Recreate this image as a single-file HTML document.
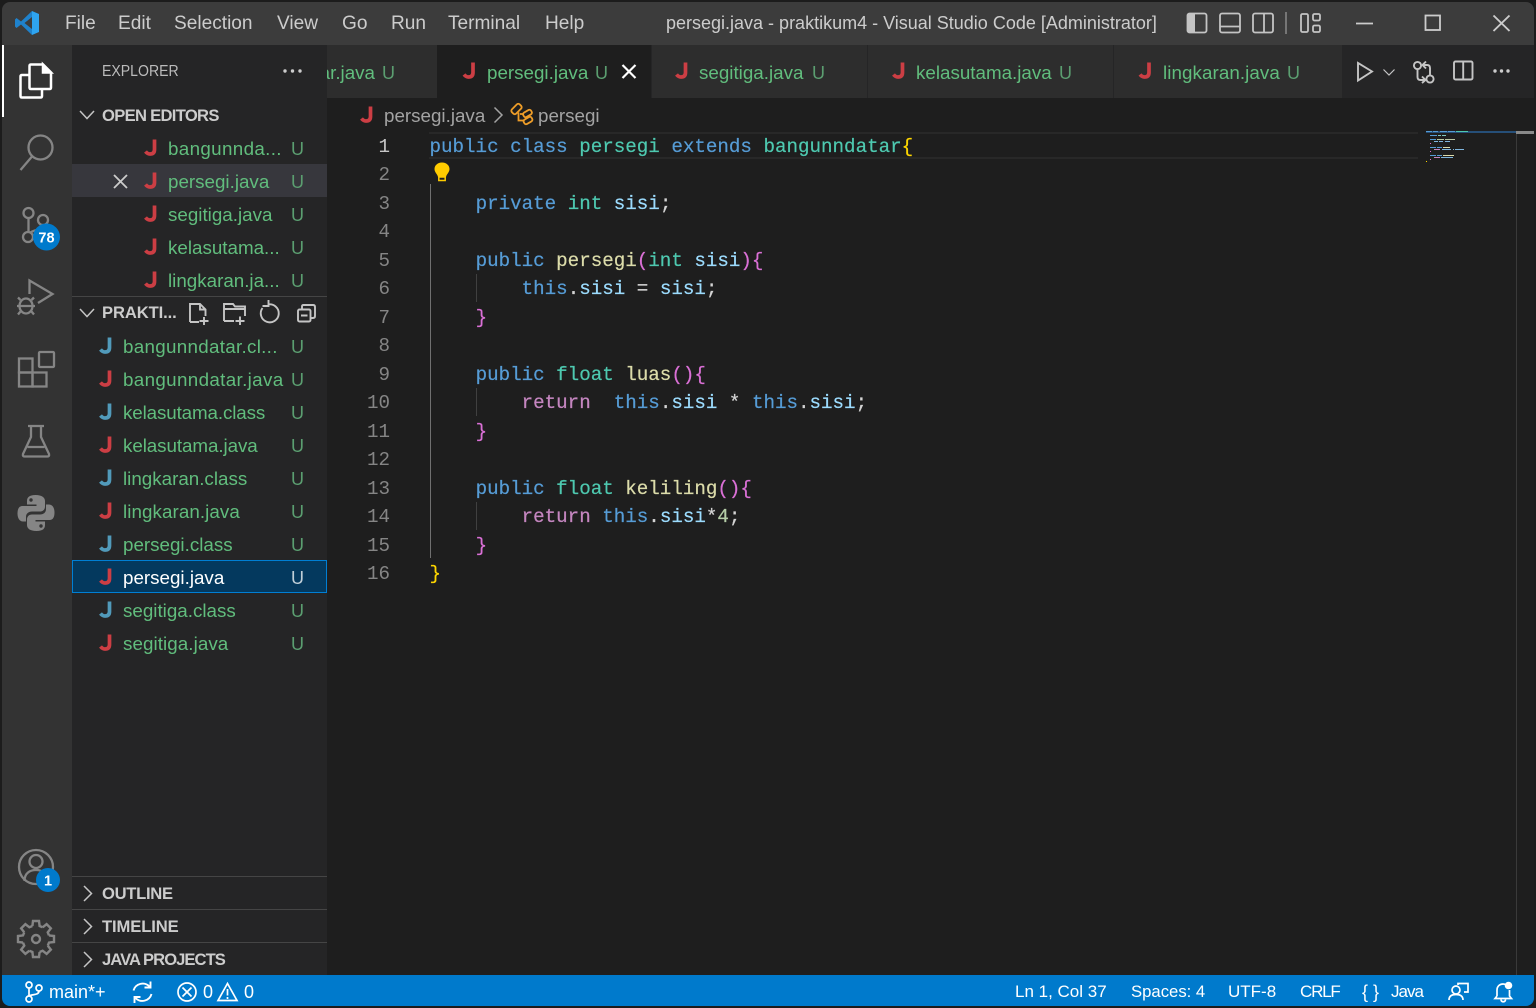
<!DOCTYPE html>
<html lang="en"><head><meta charset="utf-8"><title>persegi.java - praktikum4 - Visual Studio Code</title>
<style>
html,body{margin:0;padding:0;width:1536px;height:1008px;overflow:hidden;background:#1c1c1c}
body{position:relative;font-family:"Liberation Sans",sans-serif}
.p{position:absolute}
#win{position:absolute;left:2px;top:2px;width:1532px;height:1004px;border-radius:8px;overflow:hidden;background:#1e1e1e}
.t{position:absolute;white-space:nowrap;line-height:24px;height:24px;font-size:18.8px;color:#ccc}
.g{color:#61bd7d}.u{color:#5b9e70;font-size:18px}
.h{font-weight:700;font-size:16.6px;color:#ccc;letter-spacing:-.1px}
.m{font-size:19.1px;color:#ccc}
.s{color:#fff;font-size:17px;line-height:24px}
svg.o{position:absolute;left:0;top:0;width:1536px;height:1008px}
pre{position:absolute;margin:0;left:429.5px;top:132.5px;font:19.2px/28.53px "Liberation Mono",monospace;color:#d4d4d4;-webkit-text-stroke:.2px}
.k{color:#569cd6}.c{color:#4ec9b0}.v{color:#9cdcfe}.f{color:#dcdcaa}.y{color:#ffd700}.q{color:#da70d6}.r{color:#c586c0}.n{color:#b5cea8}
#ln{position:absolute;left:350px;width:40px;top:132.5px;text-align:right;font:19.2px/28.53px "Liberation Mono",monospace;color:#858585}
#ln b{font-weight:400;color:#c6c6c6}
</style></head><body>
<div id="win"></div>
<div class="p" style="left:2px;top:2px;width:1532px;height:43px;background:#3c3c3c;border-radius:8px 8px 0 0"></div>
<div class="p" style="left:2px;top:45px;width:70px;height:930px;background:#333"></div>
<div class="p" style="left:72px;top:45px;width:255px;height:930px;background:#252526"></div>
<div class="p" style="left:327px;top:45px;width:1207px;height:53px;background:#252526"></div>
<div class="p" style="left:327px;top:45px;width:110px;height:53px;background:#2d2d2d"></div>
<div class="p" style="left:437px;top:45px;width:214px;height:53px;background:#1e1e1e"></div>
<div class="p" style="left:652px;top:45px;width:215px;height:53px;background:#2d2d2d"></div>
<div class="p" style="left:868px;top:45px;width:245px;height:53px;background:#2d2d2d"></div>
<div class="p" style="left:1114px;top:45px;width:228px;height:53px;background:#2d2d2d"></div>
<div class="p" style="left:72px;top:164px;width:255px;height:33px;background:#37373d"></div>
<div class="p" style="left:72px;top:560px;width:253px;height:31px;background:#04395e;border:1px solid #007fd4"></div>
<div class="p" style="left:72px;top:296px;width:255px;height:1px;background:#454545"></div>
<div class="p" style="left:72px;top:876px;width:255px;height:1px;background:#454545"></div>
<div class="p" style="left:72px;top:909px;width:255px;height:1px;background:#454545"></div>
<div class="p" style="left:72px;top:942px;width:255px;height:1px;background:#454545"></div>
<div class="p" style="left:429px;top:132px;width:989px;height:2px;background:#282828"></div>
<div class="p" style="left:429px;top:157px;width:989px;height:2px;background:#282828"></div>
<div class="p" style="left:2px;top:975px;width:1532px;height:31px;background:#007acc;border-radius:0 0 8px 8px"></div>
<div class="p" style="left:2px;top:45px;width:2px;height:72px;background:#fff"></div>
<div class="p" style="left:430px;top:184px;width:1px;height:374px;background:#707070"></div>
<div class="p" style="left:476px;top:274px;width:1px;height:28px;background:#404040"></div>
<div class="p" style="left:476px;top:388px;width:1px;height:28px;background:#404040"></div>
<div class="p" style="left:476px;top:502px;width:1px;height:28px;background:#404040"></div>
<div class="p" style="left:1516px;top:131px;width:1px;height:844px;background:#3a3a3a"></div>
<div class="p" style="left:1516px;top:131px;width:18px;height:3px;background:#8a8a8a"></div>
<div class="p" style="left:1426px;top:131px;width:90px;height:2px;background:#264f78"></div>

<!-- title bar -->
<div class="t m" style="left:65px;top:12px">File</div>
<div class="t m" style="left:118px;top:12px">Edit</div>
<div class="t m" style="left:174px;top:12px">Selection</div>
<div class="t m" style="left:277px;top:12px">View</div>
<div class="t m" style="left:342px;top:12px">Go</div>
<div class="t m" style="left:391px;top:12px">Run</div>
<div class="t m" style="left:448px;top:12px">Terminal</div>
<div class="t m" style="left:545px;top:12px">Help</div>
<div class="t" style="left:666px;top:11px;font-size:18px">persegi.java - praktikum4 - Visual Studio Code [Administrator]</div>

<!-- tabs -->
<div class="t g" style="left:327px;top:61px;width:48px;overflow:hidden;direction:rtl;text-align:right"><bdi>bangunndatar.java</bdi></div>
<div class="t u" style="left:382px;top:61px">U</div>
<div class="t g" style="left:487px;top:61px">persegi.java</div><div class="t u" style="left:595px;top:61px">U</div>
<div class="t g" style="left:699px;top:61px">segitiga.java</div><div class="t u" style="left:812px;top:61px">U</div>
<div class="t g" style="left:916px;top:61px">kelasutama.java</div><div class="t u" style="left:1059px;top:61px">U</div>
<div class="t g" style="left:1163px;top:61px;letter-spacing:.07px">lingkaran.java</div><div class="t u" style="left:1287px;top:61px">U</div>

<!-- breadcrumbs -->
<div class="t" style="left:384px;top:104px;color:#a3a3a3">persegi.java</div>
<div class="t" style="left:538px;top:104px;color:#a3a3a3">persegi</div>

<!-- sidebar -->
<div class="t" style="left:102px;top:60px;font-size:16px;color:#bbb;transform:scaleX(.88);transform-origin:left center">EXPLORER</div>
<div class="t h" style="left:102px;top:104px;letter-spacing:-.7px">OPEN EDITORS</div>
<div class="t g" style="left:168px;top:137px;letter-spacing:.35px">bangunnda...</div><div class="t u" style="left:291px;top:137px">U</div>
<div class="t g" style="left:168px;top:170px">persegi.java</div><div class="t u" style="left:291px;top:170px">U</div>
<div class="t g" style="left:168px;top:203px">segitiga.java</div><div class="t u" style="left:291px;top:203px">U</div>
<div class="t g" style="left:168px;top:236px">kelasutama...</div><div class="t u" style="left:291px;top:236px">U</div>
<div class="t g" style="left:168px;top:269px">lingkaran.ja...</div><div class="t u" style="left:291px;top:269px">U</div>
<div class="t h" style="left:102px;top:301px">PRAKTI...</div>
<div class="t g" style="left:123px;top:335px;letter-spacing:.3px">bangunndatar.cl...</div><div class="t u" style="left:291px;top:335px">U</div>
<div class="t g" style="left:123px;top:368px;letter-spacing:.35px">bangunndatar.java</div><div class="t u" style="left:291px;top:368px">U</div>
<div class="t g" style="left:123px;top:401px;letter-spacing:-.12px">kelasutama.class</div><div class="t u" style="left:291px;top:401px">U</div>
<div class="t g" style="left:123px;top:434px;letter-spacing:-.07px">kelasutama.java</div><div class="t u" style="left:291px;top:434px">U</div>
<div class="t g" style="left:123px;top:467px">lingkaran.class</div><div class="t u" style="left:291px;top:467px">U</div>
<div class="t g" style="left:123px;top:500px;letter-spacing:.07px">lingkaran.java</div><div class="t u" style="left:291px;top:500px">U</div>
<div class="t g" style="left:123px;top:533px">persegi.class</div><div class="t u" style="left:291px;top:533px">U</div>
<div class="t" style="left:123px;top:566px;color:#fff">persegi.java</div><div class="t u" style="left:291px;top:566px;color:#c0cfd8">U</div>
<div class="t g" style="left:123px;top:599px">segitiga.class</div><div class="t u" style="left:291px;top:599px">U</div>
<div class="t g" style="left:123px;top:632px;letter-spacing:.07px">segitiga.java</div><div class="t u" style="left:291px;top:632px">U</div>
<div class="t h" style="left:102px;top:882px;letter-spacing:-.3px">OUTLINE</div>
<div class="t h" style="left:102px;top:915px">TIMELINE</div>
<div class="t h" style="left:102px;top:948px;letter-spacing:-.95px">JAVA PROJECTS</div>

<!-- code -->
<div id="ln"><b>1</b><br>2<br>3<br>4<br>5<br>6<br>7<br>8<br>9<br>10<br>11<br>12<br>13<br>14<br>15<br>16</div>
<pre><span class="k">public</span> <span class="k">class</span> <span class="c">persegi</span> <span class="k">extends</span> <span class="c">bangunndatar</span><span class="y">{</span>

    <span class="k">private</span> <span class="c">int</span> <span class="v">sisi</span>;

    <span class="k">public</span> <span class="f">persegi</span><span class="q">(</span><span class="c">int</span> <span class="v">sisi</span><span class="q">){</span>
        <span class="k">this</span>.<span class="v">sisi</span> = <span class="v">sisi</span>;
    <span class="q">}</span>

    <span class="k">public</span> <span class="c">float</span> <span class="f">luas</span><span class="q">(){</span>
        <span class="r">return</span>  <span class="k">this</span>.<span class="v">sisi</span> * <span class="k">this</span>.<span class="v">sisi</span>;
    <span class="q">}</span>

    <span class="k">public</span> <span class="c">float</span> <span class="f">keliling</span><span class="q">(){</span>
        <span class="r">return</span> <span class="k">this</span>.<span class="v">sisi</span>*<span class="n">4</span>;
    <span class="q">}</span>
<span class="y">}</span></pre>

<!-- status text -->
<div class="t s" style="left:49px;top:980px;font-size:18px">main*+</div>
<div class="t s" style="left:203px;top:980px;font-size:18px">0</div>
<div class="t s" style="left:244px;top:980px;font-size:18px">0</div>
<div class="t s" style="left:1015px;top:980px">Ln 1, Col 37</div>
<div class="t s" style="left:1131px;top:980px;font-size:16.7px">Spaces: 4</div>
<div class="t s" style="left:1228px;top:980px">UTF-8</div>
<div class="t s" style="left:1300px;top:980px;letter-spacing:-1.2px">CRLF</div>
<div class="t s" style="left:1362px;top:980px;font-size:18px">{ }</div>
<div class="t s" style="left:1391px;top:980px;letter-spacing:-1px">Java</div>

<svg class="o" viewBox="0 0 1536 1008" fill="none" stroke-linecap="butt">
<!-- logo -->
<path d="M32 11L21 21.500L16.500 18L15 19.500V26.500L16.500 28L21 24.500L32 35V29L24.500 23L32 17Z" fill="#1f82cc"/>
<path d="M32 11L39 14V32L32 35Z" fill="#2ea4f0"/>
<!-- title icons -->
<g stroke="#c4c4c4" stroke-width="1.8">
<rect x="1187.5" y="13.5" width="19" height="19" rx="2"/><path d="M1188 14H1195V32H1188Z" fill="#c4c4c4" stroke="none"/>
<rect x="1220" y="13.5" width="20" height="19" rx="2"/><path d="M1220 26.5H1240"/>
<rect x="1253" y="13.5" width="20" height="19" rx="2"/><path d="M1264 13.5V32.5"/>
<path d="M1286 12V34" stroke="#7d7d7d"/>
<rect x="1301" y="14" width="7" height="18" rx="1.5"/><rect x="1313" y="14" width="7" height="6.5" rx="1.5"/><rect x="1313" y="25.5" width="7" height="6.5" rx="1.5"/>
<path d="M1356 23.5H1373" stroke="#ccc"/>
<rect x="1425.5" y="15.5" width="14.5" height="14.5" stroke="#ccc" stroke-width="1.8"/>
<path d="M1493.5 15.5 L1509.5 31 M1509.5 15.5 L1493.5 31" stroke="#ccc" stroke-width="1.9"/>
</g>
<!-- activity icons -->
<g stroke="#fff" stroke-width="2.5">
<path d="M29.5 88V66Q29.5 64.5 31 64.5H43L51 72.5V87.5Q51 89 49.5 89H31Q29.5 89 29.5 87.5"/>
<path d="M43 64.5L51 72.5H43Z" fill="#fff"/>
<path d="M29.5 75H22Q20.5 75 20.5 76.5V96Q20.5 97.500 22 97.500H40.500Q42 97.500 42 96V89"/>
</g>
<g stroke="#858585" stroke-width="2.3">
<circle cx="40.500" cy="147.500" r="12"/><path d="M32 156.500L20.500 170"/>
<circle cx="28.500" cy="213" r="5"/><circle cx="43" cy="220" r="5"/><circle cx="28" cy="237" r="5"/>
<path d="M28.500 218V232M43 225C43 231 33 229 30 233"/>
<path d="M29.500 294V280.500L52.500 294L38 303"/>
<ellipse cx="26" cy="306" rx="6.500" ry="7.500"/><path d="M20 306H32M20.500 300L18 297.500M31.500 300L34 297.500M19.500 306H17M32.500 306H35M20.500 311.500L18 314.500M31.500 311.500L34 314.500"/>
<rect x="19" y="358.500" width="13.500" height="14"/><rect x="19" y="372.500" width="13.500" height="14"/><rect x="32.500" y="372.500" width="14" height="14"/><rect x="39" y="352" width="15" height="15" rx="1"/>
<path d="M28 426H44M31 426V437L23 454Q22.500 456.500 24.500 456.500H47.500Q49.500 456.500 49 454L41 437V426M27.500 447H44.500"/>
<circle cx="36" cy="867" r="17"/><circle cx="36" cy="861.500" r="6.500"/><path d="M24.500 881C24.500 873 30 870 36 870C42 870 47.500 873 47.500 881"/>
<g transform="translate(36 939)" stroke-width="2.400">
<path d="M-3.600-13L-3-18H3L3.600-13L6.640-11.740"/><path transform="rotate(45)" d="M-3.600-13L-3-18H3L3.600-13L6.640-11.740"/><path transform="rotate(90)" d="M-3.600-13L-3-18H3L3.600-13L6.640-11.740"/><path transform="rotate(135)" d="M-3.600-13L-3-18H3L3.600-13L6.640-11.740"/><path transform="rotate(180)" d="M-3.600-13L-3-18H3L3.600-13L6.640-11.740"/><path transform="rotate(225)" d="M-3.600-13L-3-18H3L3.600-13L6.640-11.740"/><path transform="rotate(270)" d="M-3.600-13L-3-18H3L3.600-13L6.640-11.740"/><path transform="rotate(315)" d="M-3.600-13L-3-18H3L3.600-13L6.640-11.740"/>
<circle r="4"/></g>
</g>
<path d="M35.500 495C29 495 27 497.500 27 501V504.500H36.500V506H22.500C19 506 17.500 509 17.500 513.500C17.500 518 19.500 521.500 23 521.500H26V517C26 513.500 28.500 511.500 32 511.500H40C43 511.500 45 509.500 45 506.500V501C45 497.500 42 495 35.500 495Z" fill="#858585"/>
<path transform="rotate(180 36 513)" d="M35.500 495C29 495 27 497.500 27 501V504.500H36.500V506H22.500C19 506 17.500 509 17.500 513.500C17.500 518 19.500 521.500 23 521.500H26V517C26 513.500 28.500 511.500 32 511.500H40C43 511.500 45 509.500 45 506.500V501C45 497.500 42 495 35.500 495Z" fill="#858585"/>
<circle cx="31" cy="500" r="1.700" fill="#333"/><circle cx="41" cy="526" r="1.700" fill="#333"/>
<circle cx="46.500" cy="237" r="13.500" fill="#007acc"/><circle cx="48" cy="880" r="12" fill="#007acc"/>
<text x="46.500" y="242.500" text-anchor="middle" font-family="Liberation Sans" font-weight="700" font-size="14.500" fill="#fff">78</text>
<text x="48" y="885.500" text-anchor="middle" font-family="Liberation Sans" font-weight="700" font-size="14.500" fill="#fff">1</text>

<!-- J icons: editors -->
<g stroke="#cc3e44" stroke-width="3.700">
<path transform="translate(145 139.500)" d="M9.500 0V10Q9.500 14.500 5 14.500Q2.500 14.500 .5 12"/>
<path transform="translate(145 172.500)" d="M9.500 0V10Q9.500 14.500 5 14.500Q2.500 14.500 .5 12"/>
<path transform="translate(145 205.500)" d="M9.500 0V10Q9.500 14.500 5 14.500Q2.500 14.500 .5 12"/>
<path transform="translate(145 238.500)" d="M9.500 0V10Q9.500 14.500 5 14.500Q2.500 14.500 .5 12"/>
<path transform="translate(145 271.500)" d="M9.500 0V10Q9.500 14.500 5 14.500Q2.500 14.500 .5 12"/>
<path transform="translate(100 370.500)" d="M9.500 0V10Q9.500 14.500 5 14.500Q2.500 14.500 .5 12"/>
<path transform="translate(100 436.500)" d="M9.500 0V10Q9.500 14.500 5 14.500Q2.500 14.500 .5 12"/>
<path transform="translate(100 502.500)" d="M9.500 0V10Q9.500 14.500 5 14.500Q2.500 14.500 .5 12"/>
<path transform="translate(100 568.500)" d="M9.500 0V10Q9.500 14.500 5 14.500Q2.500 14.500 .5 12"/>
<path transform="translate(100 634.500)" d="M9.500 0V10Q9.500 14.500 5 14.500Q2.500 14.500 .5 12"/>
<path transform="translate(463.500 62.500)" d="M9.500 0V10Q9.500 14.500 5 14.500Q2.500 14.500 .5 12"/>
<path transform="translate(676 62.500)" d="M9.500 0V10Q9.500 14.500 5 14.500Q2.500 14.500 .5 12"/>
<path transform="translate(893 62.500)" d="M9.500 0V10Q9.500 14.500 5 14.500Q2.500 14.500 .5 12"/>
<path transform="translate(1139.500 62.500)" d="M9.500 0V10Q9.500 14.500 5 14.500Q2.500 14.500 .5 12"/>
<path transform="translate(361 106.500)" d="M9.500 0V10Q9.500 14.500 5 14.500Q2.500 14.500 .5 12"/>
</g>
<g stroke="#519aba" stroke-width="3.700">
<path transform="translate(100 337.500)" d="M9.500 0V10Q9.500 14.500 5 14.500Q2.500 14.500 .5 12"/>
<path transform="translate(100 403.500)" d="M9.500 0V10Q9.500 14.500 5 14.500Q2.500 14.500 .5 12"/>
<path transform="translate(100 469.500)" d="M9.500 0V10Q9.500 14.500 5 14.500Q2.500 14.500 .5 12"/>
<path transform="translate(100 535.500)" d="M9.500 0V10Q9.500 14.500 5 14.500Q2.500 14.500 .5 12"/>
<path transform="translate(100 601.500)" d="M9.500 0V10Q9.500 14.500 5 14.500Q2.500 14.500 .5 12"/>
</g>

<!-- close marks -->
<path d="M114 175L127 188M127 175L114 188" stroke="#ccc" stroke-width="1.800"/>
<path d="M622.500 65L635.500 78M635.500 65L622.500 78" stroke="#fff" stroke-width="2.200"/>
<!-- chevrons -->
<g stroke="#c5c5c5" stroke-width="1.500">
<path d="M80 111L87 118.500L94 111"/><path d="M80 309L87 316.500L94 309"/>
<path d="M84 886L91.500 893.500L84 901"/><path d="M84 919L91.500 926.500L84 934"/><path d="M84 952L91.500 959.500L84 967"/>
<path d="M1383.500 69.500L1389 75L1394.500 69.500" stroke-width="1.200"/>
<path d="M494.500 107.500L502 115L494.500 122.500" stroke="#a3a3a3"/>
</g>
<!-- dots -->
<g fill="#ccc"><circle cx="285" cy="71" r="1.700"/><circle cx="292.500" cy="71" r="1.700"/><circle cx="300" cy="71" r="1.700"/>
<circle cx="1495" cy="71" r="1.700"/><circle cx="1501.500" cy="71" r="1.700"/><circle cx="1508" cy="71" r="1.700"/></g>
<!-- editor actions -->
<g stroke="#c5c5c5" stroke-width="1.900">
<path d="M1358 63V80.500L1372 71.500Z"/>
<circle cx="1417.500" cy="65.500" r="3.600"/><circle cx="1430" cy="79" r="3.600"/>
<path d="M1417.500 69.500V77Q1417.500 80 1420.500 80H1425M1422 76.500L1425.500 80L1422 83M1430 75V68Q1430 65 1427 65H1422.500M1426 61.500L1422.500 65L1426 68.500"/>
<rect x="1454" y="61.500" width="18.500" height="18" rx="1.500"/><path d="M1463.200 61.500V79.500"/>
<!-- sidebar actions -->
<path d="M190 322V304H200L205.500 309.500V316M200 304V309.500H205.500M190 322H199M204 317V325M199.500 321H208.500"/>
<path d="M224 321V304H233L235 306.500H245V316M224 309H245M224 321H234M240 316.500V325M235.500 321H244.500"/>
<path d="M262.500 308A9 9 0 1 0 268 304.500M268.500 300V306H262.500"/>
<rect x="298" y="309.500" width="12.500" height="12" rx="1.500"/><path d="M302 309.500V306.500Q302 305 303.500 305H313Q315 305 315 307V316Q315 318 313 318H310.500M301 315.500H307.500"/>
</g>
<!-- breadcrumb symbol -->
<g stroke="#ee9d28" stroke-width="1.800">
<rect x="511" y="106" width="11" height="6" rx="2" transform="rotate(-45 516.500 109)"/>
<rect x="523" y="111" width="9" height="5" rx="2" transform="rotate(-30 527.500 113.500)"/>
<rect x="523.500" y="118" width="9" height="5" rx="2" transform="rotate(-30 528 120.500)"/>
<path d="M518.500 112.500V120.500H524M520 114H524"/>
</g>
<!-- bulb -->
<path d="M442 162.500C437.500 162.500 434.500 165.500 434.500 169C434.500 172.500 437.500 174 438 177H446C446.500 174 449.500 172.500 449.500 169C449.500 165.500 446.500 162.500 442 162.500Z" fill="#ffcc00"/>
<path d="M438.800 177H445.200V180.500H438.800Z" fill="#1e1e1e" stroke="#ffcc00" stroke-width="1.500"/>
<!-- status icons -->
<g stroke="#fff" stroke-width="1.700">
<circle cx="29" cy="985" r="3"/><circle cx="29" cy="999" r="3"/><circle cx="39" cy="988" r="3"/>
<path d="M29 988V996M39 991C39 995.500 32 994 29 996"/>
<path d="M133.500 990.500A9.500 9.500 0 0 1 149.500 986.500M151.500 994A9.500 9.500 0 0 1 135.500 998M150.500 981.500V987.500H144.500M134.500 1003V997H140.500" stroke-width="1.900"/>
<circle cx="187" cy="992" r="9"/><path d="M182.500 987.500L191.500 996.500M191.500 987.500L182.500 996.500"/>
<path d="M227.500 983.500L237 1000.500H218Z"/><path d="M227.500 989V995.500M227.500 997V999"/>
<circle cx="1456" cy="990" r="4"/><path d="M1449 1000C1449 996 1452 994.500 1456 994.500C1460 994.500 1463 996 1463 1000M1458 985V983.500H1468V992H1464"/>
<path d="M1497 996V990C1497 986.500 1499.500 984 1503 984C1504 984 1505 984.200 1506 984.800M1509.500 990V996L1511.500 998.500H1495L1497 996M1501 999.500C1501 1002.500 1505.500 1002.500 1505.500 999.500"/>
</g>
<circle cx="1508.500" cy="985.500" r="3.800" fill="#fff"/>
<!-- minimap -->
<g stroke-width="1">
<path d="M1426 131.500h6m1 0h5m2 0h7m1 0h7" stroke="#569cd6"/><path d="M1456 131.500h12" stroke="#4ec9b0"/>
<path d="M1430 135.500h7" stroke="#569cd6"/><path d="M1438 135.500h3m1 0h4" stroke="#7fc6c0"/>
<path d="M1430 139.500h6" stroke="#569cd6"/><path d="M1437 139.500h7m1 0h10" stroke="#b9c9a5"/>
<path d="M1434 141.500h4m1 0h4m2 0h5" stroke="#7fb6de"/><path d="M1430 143.500h1" stroke="#da70d6"/>
<path d="M1430 147.500h6m1 0h5" stroke="#569cd6"/><path d="M1443 147.500h7" stroke="#dcdcaa"/>
<path d="M1434 149.500h6" stroke="#c586c0"/><path d="M1442 149.500h9m2 0h1m1 0h9" stroke="#7fb6de"/><path d="M1430 151.500h1" stroke="#da70d6"/>
<path d="M1430 155.500h6m1 0h5" stroke="#569cd6"/><path d="M1443 155.500h11" stroke="#dcdcaa"/>
<path d="M1434 157.500h6" stroke="#c586c0"/><path d="M1441 157.500h12" stroke="#7fb6de"/><path d="M1430 159.500h1" stroke="#da70d6"/><path d="M1426 161.500h1" stroke="#ffd700"/>
</g>
</svg>
</body></html>
